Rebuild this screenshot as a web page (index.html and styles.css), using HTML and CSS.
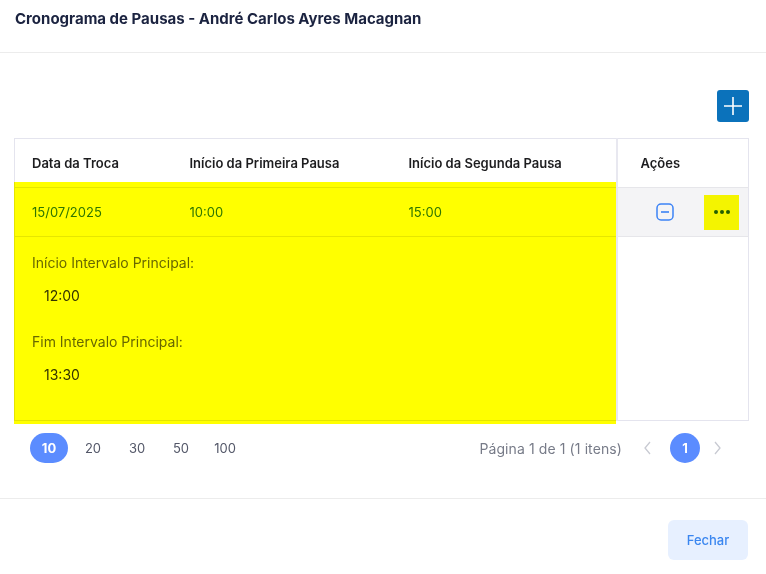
FILE: index.html
```html
<!DOCTYPE html>
<html lang="pt-BR">
<head>
    <meta charset="UTF-8">
    <meta name="viewport" content="width=device-width, initial-scale=1.0">
    <title>Cronograma de Pausas</title>
    <link rel="stylesheet" href="styles.css">
</head>
<body>
    <div class="modal">
        <div class="modal-header">
            <h2>Cronograma de Pausas - André Carlos Ayres Macagnan</h2>
        </div>

        <div class="modal-body">
            <div class="toolbar">
                <button class="btn-add" title="Adicionar">
                    <svg width="20" height="20" viewBox="0 0 20 20">
                        <path d="M10 1v18M1 10h18" stroke="#fff" stroke-width="1.6" fill="none"/>
                    </svg>
                </button>
            </div>

            <div class="grid-wrap">
                <table class="grid">
                    <colgroup>
                        <col style="width: 158px">
                        <col style="width: 219px">
                        <col style="width: 225px">
                        <col>
                    </colgroup>
                    <thead>
                        <tr>
                            <th>Data da Troca</th>
                            <th>Início da Primeira Pausa</th>
                            <th>Início da Segunda Pausa</th>
                            <th class="col-actions">Ações</th>
                        </tr>
                    </thead>
                    <tbody>
                        <tr class="data-row">
                            <td>15/07/2025</td>
                            <td>10:00</td>
                            <td>15:00</td>
                            <td class="col-actions">
                                <div class="actions">
                                    <button class="btn-collapse" title="Recolher">
                                        <svg width="18" height="18" viewBox="0 0 18 18">
                                            <rect x="1" y="1" width="16" height="16" rx="4" stroke="#3b82f6" stroke-width="1.5" fill="none"/>
                                            <path d="M5 9h8" stroke="#3b82f6" stroke-width="1.6"/>
                                        </svg>
                                    </button>
                                    <button class="btn-more" title="Mais">
                                        <span></span><span></span><span></span>
                                    </button>
                                </div>
                            </td>
                        </tr>
                        <tr class="detail-row">
                            <td colspan="3">
                                <div class="detail">
                                    <div class="detail-label">Início Intervalo Principal:</div>
                                    <div class="detail-value">12:00</div>
                                </div>
                                <div class="detail">
                                    <div class="detail-label">Fim Intervalo Principal:</div>
                                    <div class="detail-value">13:30</div>
                                </div>
                            </td>
                            <td class="col-actions"></td>
                        </tr>
                    </tbody>
                </table>
                <!-- marca-texto sobre a linha selecionada -->
                <div class="highlight"></div>
            </div>

            <div class="pager">
                <div class="page-sizes">
                    <button class="size active">10</button>
                    <button class="size">20</button>
                    <button class="size">30</button>
                    <button class="size">50</button>
                    <button class="size">100</button>
                </div>
                <div class="pages">
                    <span class="page-info">Página 1 de 1 (1 itens)</span>
                    <button class="nav">
                        <svg width="10" height="14" viewBox="0 0 10 14"><path d="M7 1L2 7l5 6" stroke="#c8cad2" stroke-width="1.3" fill="none"/></svg>
                    </button>
                    <button class="page active">1</button>
                    <button class="nav">
                        <svg width="10" height="14" viewBox="0 0 10 14"><path d="M3 1l5 6-5 6" stroke="#c8cad2" stroke-width="1.3" fill="none"/></svg>
                    </button>
                </div>
            </div>
        </div>

        <div class="modal-footer">
            <button class="btn-close">Fechar</button>
        </div>
    </div>
</body>
</html>
```

FILE: styles.css
```css
body {
    margin: 0;
    font-family: Inter, "Noto Sans", Arial, sans-serif;
    background: #fff;
    color: #1d1d1f;
}
button {
    font-family: inherit;
    border: none;
    background: none;
    cursor: pointer;
    padding: 0;
}
.modal-header {
    height: 53px;
    box-sizing: border-box;
    padding: 9px 15px 0;
    border-bottom: 1px solid #ececec;
}
.modal-header h2 {
    margin: 0;
    font-size: 15px;
    line-height: 20px;
    font-weight: 700;
    color: #1b2340;
}
.modal-body {
    padding: 37px 17px 0 14px;
}
.toolbar {
    display: flex;
    justify-content: flex-end;
    margin-bottom: 16px;
}
.btn-add {
    width: 32px;
    height: 32px;
    border-radius: 3px;
    background: #0b72bb;
    display: flex;
    align-items: center;
    justify-content: center;
}
.grid-wrap {
    position: relative;
}
.grid {
    width: 100%;
    border-collapse: collapse;
    table-layout: fixed;
    border: 1px solid #e4e4ee;
    font-size: 13px;
}
.grid th {
    text-align: left;
    font-weight: 600;
    height: 48px;
    padding: 0 17px;
    color: #1d1d1f;
}
.grid td {
    padding: 0 17px;
}
.grid .col-actions {
    border-left: 2px solid #e8e8f0;
    padding-left: 23px;
}
.data-row td {
    height: 48px;
    border-top: 1px solid #e6e6ea;
    border-bottom: 1px solid #e6e6ea;
    color: #2f76c8;
    background: #fff;
}
.data-row td.col-actions {
    background: #f4f4f6;
    padding: 0 9px 0 38px;
}
.actions {
    display: flex;
    align-items: center;
    justify-content: space-between;
}
.btn-collapse {
    display: flex;
    width: 18px;
    height: 18px;
}
.btn-more {
    width: 35px;
    height: 35px;
    background: #f4f400;
    display: flex;
    align-items: center;
    justify-content: center;
    gap: 2px;
}
.btn-more span {
    width: 4px;
    height: 4px;
    border-radius: 50%;
    background: #235f00;
}
.detail-row td {
    vertical-align: top;
    padding: 16px 17px 35px;
}
.detail + .detail {
    margin-top: 26px;
}
.detail-label {
    font-size: 14px;
    line-height: 20px;
    color: #686870;
}
.detail-value {
    font-size: 14px;
    line-height: 20px;
    margin-top: 13px;
    padding-left: 12px;
    color: #333;
}
.highlight {
    position: absolute;
    top: 44px;
    left: 0;
    width: 602px;
    height: 242px;
    background: #ffff00;
    mix-blend-mode: multiply;
    pointer-events: none;
}
.pager {
    display: flex;
    justify-content: space-between;
    align-items: center;
    margin-top: 12px;
    padding: 0 26px 0 16px;
}
.page-sizes {
    display: flex;
    gap: 6px;
}
.size {
    width: 38px;
    height: 30px;
    border-radius: 15px;
    font-size: 13px;
    color: #535768;
}
.size.active,
.page.active {
    background: #5b8cff;
    color: #fff;
    font-weight: 700;
}
.pages {
    display: flex;
    align-items: center;
}
.page-info {
    font-size: 14px;
    letter-spacing: 0.1px;
    color: #777b88;
    margin-right: 20px;
}
.nav {
    width: 12px;
    height: 30px;
    display: flex;
    align-items: center;
    justify-content: center;
}
.page {
    width: 30px;
    height: 30px;
    border-radius: 50%;
    font-size: 13px;
    margin: 0 11px 0 16px;
}
.modal-footer {
    margin-top: 35px;
    border-top: 1px solid #ececec;
    padding: 21px 18px 0;
    display: flex;
    justify-content: flex-end;
}
.btn-close {
    width: 80px;
    height: 40px;
    border-radius: 6px;
    background: #e7f0ff;
    color: #3a86f0;
    font-size: 13px;
    font-weight: 500;
}
```
